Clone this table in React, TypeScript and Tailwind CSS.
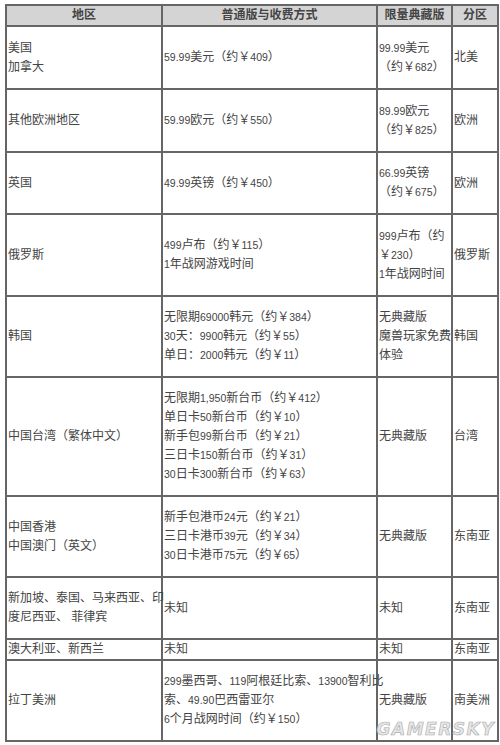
import React from "react";

type Row = {
  h: string;
  region: string[];
  normal: string[];
  limited: string[];
  zone: string;
};

const rows: Row[] = [
  { h: "h-[63px]", region: ["美国", "加拿大"], normal: ["59.99美元（约￥409）"], limited: ["99.99美元", "（约￥682）"], zone: "北美" },
  { h: "h-[63px]", region: ["其他欧洲地区"], normal: ["59.99欧元（约￥550）"], limited: ["89.99欧元", "（约￥825）"], zone: "欧洲" },
  { h: "h-[62px]", region: ["英国"], normal: ["49.99英镑（约￥450）"], limited: ["66.99英镑", "（约￥675）"], zone: "欧洲" },
  { h: "h-[82px]", region: ["俄罗斯"], normal: ["499卢布（约￥115）", "1年战网游戏时间"], limited: ["999卢布（约", "￥230）", "1年战网时间"], zone: "俄罗斯" },
  {
    h: "h-[81px]",
    region: ["韩国"],
    normal: ["无限期69000韩元（约￥384）", "30天：9900韩元（约￥55）", "单日：2000韩元（约￥11）"],
    limited: ["无典藏版", "魔兽玩家免费", "体验"],
    zone: "韩国",
  },
  {
    h: "h-[119px]",
    region: ["中国台湾（繁体中文）"],
    normal: [
      "无限期1,950新台币（约￥412）",
      "单日卡50新台币（约￥10）",
      "新手包99新台币（约￥21）",
      "三日卡150新台币（约￥31）",
      "30日卡300新台币（约￥63）",
    ],
    limited: ["无典藏版"],
    zone: "台湾",
  },
  {
    h: "h-[81px]",
    region: ["中国香港", "中国澳门（英文）"],
    normal: ["新手包港币24元（约￥21）", "三日卡港币39元（约￥34）", "30日卡港币75元（约￥65）"],
    limited: ["无典藏版"],
    zone: "东南亚",
  },
  { h: "h-[62px]", region: ["新加坡、泰国、马来西亚、印", "度尼西亚、 菲律宾"], normal: ["未知"], limited: ["未知"], zone: "东南亚" },
  { h: "h-[21px]", region: ["澳大利亚、新西兰"], normal: ["未知"], limited: ["未知"], zone: "东南亚" },
  {
    h: "h-[81px]",
    region: ["拉丁美洲"],
    normal: ["299墨西哥、119阿根廷比索、13900智利比", "索、49.90巴西雷亚尔", "6个月战网时间（约￥150）"],
    limited: ["无典藏版"],
    zone: "南美洲",
  },
];

// digits in the source are set in a smaller face than the hanzi
function Txt({ s }: { s: string }) {
  const parts = s.split(/([0-9.,]+)/);
  return (
    <>
      {parts.map((p, i) =>
        /^[0-9.,]+$/.test(p) ? (
          <span key={i} className="text-[10.5px]">
            {p}
          </span>
        ) : (
          <span key={i}>{p}</span>
        )
      )}
    </>
  );
}

function Lines({ lines }: { lines: string[] }) {
  return (
    <div className="flex flex-col">
      {lines.map((l, i) => (
        <div key={i} className="whitespace-nowrap">
          <Txt s={l} />
        </div>
      ))}
    </div>
  );
}

const cell = "border-2 border-[#666] p-0 pl-px align-middle";
const head = "border-2 border-[#666] p-0 text-center align-middle font-bold";

export default function App() {
  return (
    <div
      className="relative w-[500px] h-[745px] bg-white pt-[4px] pl-[5px] text-[12px] leading-[19px] text-[#444]"
      style={{ fontFamily: '"Liberation Sans", "Noto Sans CJK SC", sans-serif' }}
    >
      <table className="w-[492px] table-fixed border-collapse border-2 border-[#666]">
        <colgroup>
          <col className="w-[156px]" />
          <col className="w-[215px]" />
          <col className="w-[75px]" />
          <col className="w-[46px]" />
        </colgroup>
        <thead>
          <tr className="h-[20px] bg-[#d4d4d4]">
            <th className={head}>地区</th>
            <th className={head}>普通版与收费方式</th>
            <th className={head}>限量典藏版</th>
            <th className={head}>分区</th>
          </tr>
        </thead>
        <tbody>
          {rows.map((r, i) => (
            <tr key={i} className={r.h}>
              <td className={cell}>
                <Lines lines={r.region} />
              </td>
              <td className={cell}>
                <Lines lines={r.normal} />
              </td>
              <td className={cell}>
                <Lines lines={r.limited} />
              </td>
              <td className={cell}>
                <Lines lines={[r.zone]} />
              </td>
            </tr>
          ))}
        </tbody>
      </table>
      <div
        className="absolute right-[5px] bottom-[7px] text-[17px] leading-none font-black italic tracking-[1.5px] text-[#e6e6e6]"
        style={{ fontFamily: '"DejaVu Sans", sans-serif', WebkitTextStroke: "0.6px #aaa" }}
      >
        GAMERSKY
      </div>
    </div>
  );
}
